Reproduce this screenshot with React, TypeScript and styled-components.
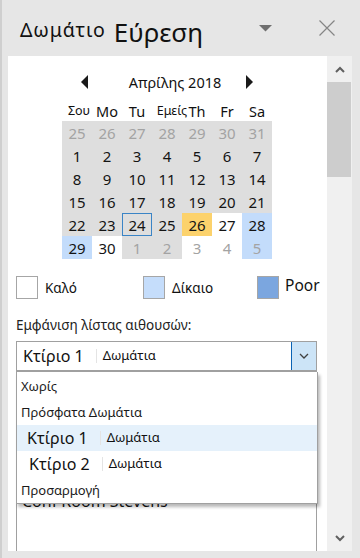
import React from 'react';
import styled, { createGlobalStyle } from 'styled-components';

const GlobalStyle = createGlobalStyle`
  html, body { margin: 0; padding: 0; background: #e6e6e6; }
  body { font-family: "Noto Sans", "Open Sans", sans-serif; color: #1a1a1a; }
  * { box-sizing: border-box; }
`;

const Frame = styled.div`
  width: 360px;
  height: 558px;
  border-left: 2px solid #cfcfcf;
  background: #e6e6e6;
  display: flex;
  flex-direction: column;
  overflow: hidden;
`;

const Header = styled.header`
  height: 56px;
  flex: none;
  display: flex;
  align-items: center;
  padding: 4px 25px 0 18px;
`;

const TabSmall = styled.span`
  font-size: 19.5px;
  letter-spacing: 0.9px;
  color: #111;
  margin-top: -2px;
`;

const TabBig = styled.span`
  font-size: 26px;
  color: #111;
  margin-left: 8px;
  margin-top: 3px;
`;

const Spacer = styled.div`
  flex: 1;
`;

const IconSlot = styled.span<{ $gap?: number }>`
  display: flex;
  align-items: center;
  margin-left: ${(p) => p.$gap ?? 0}px;
  margin-top: -4px;
`;

const Main = styled.div`
  flex: 1;
  display: flex;
  margin: 0 8px 7px 6px;
  min-height: 0;
`;

const Panel = styled.div`
  flex: 1;
  background: #fff;
  overflow: hidden;
  padding: 16px 10px 0 8px;
  display: flex;
  flex-direction: column;
`;

const Scrollbar = styled.div`
  width: 25px;
  flex: none;
  background: #f0f0f0;
  display: flex;
  flex-direction: column;
`;

const ScrollButton = styled.div`
  height: 26px;
  flex: none;
  display: flex;
  align-items: center;
  justify-content: center;
`;

const ScrollThumb = styled.div`
  height: 95px;
  width: 24px;
  background: #cdcdcd;
  flex: none;
`;

const ScrollTrack = styled.div`
  flex: 1;
`;

const Calendar = styled.div`
  width: 210px;
  margin-left: 46px;
`;

const NavRow = styled.div`
  height: 20px;
  display: flex;
  align-items: center;
  justify-content: space-between;
  padding: 0 19px 0 19px;
`;

const MonthLabel = styled.span`
  font-size: 14.5px;
  padding-left: 16px;
  color: #111;
`;

const DayNames = styled.div`
  margin-top: 8px;
  height: 21px;
  display: grid;
  grid-template-columns: repeat(7, 30px);
  align-items: center;
`;

const DayName = styled.span<{ $small?: boolean; $shift?: number }>`
  display: flex;
  justify-content: center;
  white-space: nowrap;
  font-size: ${(p) => (p.$small ? 12.5 : 14.5)}px;
  color: #111;
  position: relative;
  left: ${(p) => p.$shift ?? 0}px;
`;

const Grid = styled.div`
  display: grid;
  grid-template-columns: repeat(7, 30px);
  grid-auto-rows: 23px;
`;

type Tone = 'gray' | 'white' | 'blue' | 'yellow';

const toneColor: Record<Tone, string> = {
  gray: '#dedede',
  white: '#ffffff',
  blue: '#c3dcfb',
  yellow: '#fcd26c',
};

const Cell = styled.div<{ $tone: Tone; $muted?: boolean; $today?: boolean }>`
  background: ${(p) => toneColor[p.$tone]};
  color: ${(p) => (p.$muted ? '#a3a3a3' : '#141414')};
  font-size: 15px;
  display: flex;
  align-items: center;
  justify-content: center;
  border: ${(p) => (p.$today ? '1px solid #3a84c6' : 'none')};
`;

const Legend = styled.div`
  margin-top: 17px;
  display: grid;
  grid-template-columns: 127px 114px 1fr;
  height: 23px;
`;

const LegendItem = styled.div`
  display: flex;
  align-items: center;
`;

const Swatch = styled.span<{ $fill: string }>`
  width: 22px;
  height: 23px;
  border: 1px solid #a6a6a6;
  background: ${(p) => p.$fill};
  flex: none;
`;

const LegendText = styled.span<{ $big?: boolean }>`
  margin-left: ${(p) => (p.$big ? 6 : 7)}px;
  font-size: ${(p) => (p.$big ? 15.5 : 13.5)}px;
  margin-top: ${(p) => (p.$big ? -5 : 1)}px;
  color: #111;
`;

const SectionLabel = styled.div`
  margin-top: 17px;
  font-size: 13.5px;
  color: #222;
  height: 19px;
  line-height: 19px;
`;

const ComboWrap = styled.div`
  position: relative;
  margin-top: 6px;
  width: 301px;
`;

const Combo = styled.div`
  height: 31px;
  border: 1px solid #a0a0a0;
  border-bottom-width: 2px;
  display: flex;
  align-items: stretch;
  background: #fff;
`;

const ComboValue = styled.div`
  flex: 1;
  display: flex;
  align-items: center;
  padding-left: 6px;
`;

const Building = styled.span`
  font-size: 16px;
  color: #111;
`;

const Sep = styled.span`
  width: 1px;
  height: 14px;
  background: #e4e4e4;
  margin: 0 6px 0 12px;
`;

const RoomsWord = styled.span`
  font-size: 13px;
  color: #111;
  margin-top: -2px;
`;

const ComboButton = styled.div`
  width: 25px;
  border-left: 1px solid #0a63b4;
  background: #cce4f7;
  display: flex;
  align-items: center;
  justify-content: center;
`;

const Dropdown = styled.div`
  position: absolute;
  top: 100%;
  left: 0;
  width: 302px;
  background: #fff;
  border: 1px solid #a0a0a0;
  border-top: none;
  box-shadow: 2px 3px 3px rgba(0, 0, 0, 0.28);
  padding-top: 1px;
  z-index: 2;
`;

const Option = styled.div<{ $active?: boolean; $indent?: number }>`
  height: 26px;
  display: flex;
  align-items: center;
  padding-left: ${(p) => p.$indent ?? 4}px;
  background: ${(p) => (p.$active ? '#e5f1fb' : 'transparent')};
  font-size: 13px;
  color: #1a1a1a;
`;

const RoomList = styled.div`
  margin-top: 9px;
  width: 301px;
  flex: 1;
  border: 1px solid #a0a0a0;
  border-bottom: none;
  padding-top: 106px;
`;

const RoomItem = styled.div`
  height: 26px;
  display: flex;
  align-items: center;
  padding-left: 5px;
  font-size: 16px;
  color: #111;
`;

type Day = { n: number; tone: Tone; muted?: boolean; today?: boolean };

const buildDays = (): Day[] => {
  const days: Day[] = [];
  for (let n = 25; n <= 31; n++) days.push({ n, tone: 'gray', muted: true });
  for (let n = 1; n <= 25; n++) days.push({ n, tone: 'gray', today: n === 24 });
  days.push({ n: 26, tone: 'yellow' });
  days.push({ n: 27, tone: 'white' });
  days.push({ n: 28, tone: 'blue' });
  days.push({ n: 29, tone: 'blue' });
  days.push({ n: 30, tone: 'white' });
  days.push({ n: 1, tone: 'gray', muted: true });
  days.push({ n: 2, tone: 'gray', muted: true });
  days.push({ n: 3, tone: 'white', muted: true });
  days.push({ n: 4, tone: 'white', muted: true });
  days.push({ n: 5, tone: 'blue', muted: true });
  return days;
};

const dayNames: { t: string; small?: boolean; shift?: number }[] = [
  { t: 'Σου', small: true, shift: 2 },
  { t: 'Mo' },
  { t: 'Tu' },
  { t: 'Εμείς', small: true, shift: 5 },
  { t: 'Th' },
  { t: 'Fr' },
  { t: 'Sa' },
];

const BuildingOption = ({ n, active }: { n: number; active?: boolean }) => (
  <Option $active={active} $indent={n === 1 ? 10 : 12}>
    <Building>Κτίριο {n}</Building>
    <Sep />
    <RoomsWord>Δωμάτια</RoomsWord>
  </Option>
);

export default function App() {
  const days = buildDays();
  return (
    <>
      <GlobalStyle />
      <Frame>
        <Header>
          <TabSmall>Δωμάτιο</TabSmall>
          <TabBig>Εύρεση</TabBig>
          <Spacer />
          <IconSlot>
            <svg width="13" height="7" viewBox="0 0 13 7">
              <polygon points="0,0 13,0 6.5,6.5" fill="#6f6f6f" />
            </svg>
          </IconSlot>
          <IconSlot $gap={47}>
            <svg width="16" height="16" viewBox="0 0 16 16">
              <path d="M0.5 0.5 L15.5 15.5 M15.5 0.5 L0.5 15.5" stroke="#858585" strokeWidth="1.2" fill="none" />
            </svg>
          </IconSlot>
        </Header>
        <Main>
          <Panel>
            <Calendar>
              <NavRow>
                <svg width="7" height="14" viewBox="0 0 7 14">
                  <polygon points="7,0 7,14 0,7" fill="#1a1a1a" />
                </svg>
                <MonthLabel>Απρίλης 2018</MonthLabel>
                <svg width="7" height="14" viewBox="0 0 7 14">
                  <polygon points="0,0 0,14 7,7" fill="#1a1a1a" />
                </svg>
              </NavRow>
              <DayNames>
                {dayNames.map((d) => (
                  <DayName key={d.t} $small={d.small} $shift={d.shift}>
                    {d.t}
                  </DayName>
                ))}
              </DayNames>
              <Grid>
                {days.map((d, i) => (
                  <Cell key={i} $tone={d.tone} $muted={d.muted} $today={d.today}>
                    {d.n}
                  </Cell>
                ))}
              </Grid>
            </Calendar>
            <Legend>
              <LegendItem>
                <Swatch $fill="#ffffff" />
                <LegendText>Καλό</LegendText>
              </LegendItem>
              <LegendItem>
                <Swatch $fill="#c5ddfb" />
                <LegendText>Δίκαιο</LegendText>
              </LegendItem>
              <LegendItem>
                <Swatch $fill="#7ba6df" />
                <LegendText $big>Poor</LegendText>
              </LegendItem>
            </Legend>
            <SectionLabel>Εμφάνιση λίστας αιθουσών:</SectionLabel>
            <ComboWrap>
              <Combo>
                <ComboValue>
                  <Building>Κτίριο 1</Building>
                  <Sep />
                  <RoomsWord>Δωμάτια</RoomsWord>
                </ComboValue>
                <ComboButton>
                  <svg width="10" height="6" viewBox="0 0 10 6">
                    <polyline points="1,1 5,5 9,1" fill="none" stroke="#404040" strokeWidth="1.3" />
                  </svg>
                </ComboButton>
              </Combo>
              <Dropdown>
                <Option>Χωρίς</Option>
                <Option>Πρόσφατα Δωμάτια</Option>
                <BuildingOption n={1} active />
                <BuildingOption n={2} />
                <Option>Προσαρμογή</Option>
              </Dropdown>
            </ComboWrap>
            <RoomList>
              <RoomItem>Conf Room Stevens</RoomItem>
            </RoomList>
          </Panel>
          <Scrollbar>
            <ScrollButton>
              <svg width="10" height="7" viewBox="0 0 10 7">
                <polyline points="1,6 5,2 9,6" fill="none" stroke="#606060" strokeWidth="2" />
              </svg>
            </ScrollButton>
            <ScrollThumb />
            <ScrollTrack />
            <ScrollButton>
              <svg width="10" height="7" viewBox="0 0 10 7">
                <polyline points="1,1 5,5 9,1" fill="none" stroke="#606060" strokeWidth="2" />
              </svg>
            </ScrollButton>
          </Scrollbar>
        </Main>
      </Frame>
    </>
  );
}
